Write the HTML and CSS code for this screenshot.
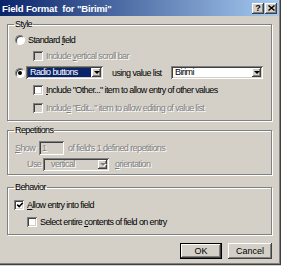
FILE: index.html
```html
<!DOCTYPE html>
<html lang="en">
<head>
  <meta charset="UTF-8">
  <title>Field Format</title>
  <link rel="stylesheet" href="styles.css">
</head>
<body>
  <div class="dialog">
    <div class="titlebar">
      <span class="title">Field Format&nbsp; for "Birimi"</span>
      <div class="caps">
        <span class="cap-btn">?</span>
        <span class="cap-btn">
          <svg width="7" height="6" viewBox="0 0 7 6"><path d="M0.5 0.5L6.5 5.5M6.5 0.5L0.5 5.5" stroke="#000" stroke-width="1.4"/></svg>
        </span>
      </div>
    </div>

    <div class="content">
      <fieldset class="group style-group">
        <legend>Style</legend>
        <div class="row r16">
          <span class="radio"></span>
          <span class="lbl">Standard <u>f</u>ield</span>
        </div>
        <div class="row r16 disabled">
          <span class="check off ind1"></span>
          <span class="lbl">Include <u>v</u>ertical scroll bar</span>
        </div>
        <div class="row r17">
          <span class="radio on"></span>
          <div class="combo combo-type">
            <span class="val sel">Radio buttons</span>
            <span class="drop"></span>
          </div>
          <span class="using">using value list</span>
          <div class="combo combo-list">
            <span class="val">Birimi</span>
            <span class="drop"></span>
          </div>
        </div>
        <div class="row r18">
          <span class="check ind1"></span>
          <span class="lbl"><u>I</u>nclude "Other..." item to allow entry of other values</span>
        </div>
        <div class="row r18 disabled">
          <span class="check off ind1"></span>
          <span class="lbl">Includ<u>e</u> "Edit..." item to allow editing of value list</span>
        </div>
      </fieldset>

      <fieldset class="group rep-group">
        <legend>Repetitions</legend>
        <div class="row r17 disabled">
          <span class="show-lbl"><u>S</u>how</span>
          <span class="field-box">1</span>
          <span class="after-box">of field's 1 defined repetitions</span>
        </div>
        <div class="row r16 disabled">
          <span class="use-lbl">Use</span>
          <div class="combo combo-orient off">
            <span class="val">vertical</span>
            <span class="drop"></span>
          </div>
          <span class="after-orient"><u>o</u>rientation</span>
        </div>
      </fieldset>

      <fieldset class="group beh-group">
        <legend>Behavior</legend>
        <div class="row r17">
          <span class="check checked">
            <svg width="8" height="8" viewBox="0 0 8 8"><path d="M1.2 3.6L3.2 5.6L6.8 1.8" fill="none" stroke="#000" stroke-width="1.5"/></svg>
          </span>
          <span class="lbl"><u>A</u>llow entry into field</span>
        </div>
        <div class="row r18">
          <span class="check ind2"></span>
          <span class="lbl">Select entire <u>c</u>ontents of field on entry</span>
        </div>
      </fieldset>

      <div class="actions">
        <button class="btn default">OK</button>
        <button class="btn">Cancel</button>
      </div>
    </div>
  </div>
</body>
</html>
```

FILE: styles.css
```css
* {
  box-sizing: border-box;
}
body {
  margin: 0;
  background: #d4d0c8;
  font-family: "Liberation Sans", Arial, sans-serif;
  font-size: 9px;
  letter-spacing: -0.6px;
  color: #000;
}
u {
  text-decoration-thickness: 1px;
  text-underline-offset: 1px;
}

.dialog {
  width: 281px;
  height: 265px;
  background: #d4d0c8;
  box-shadow: inset -1px -1px 0 #404040, inset -2px -2px 0 #808080;
  overflow: hidden;
}

/* title bar */
.titlebar {
  height: 16px;
  margin-right: 2px;
  padding: 0 2px 0 2px;
  background: linear-gradient(to right, #0a246a, #a6caf0);
  display: flex;
  align-items: center;
  justify-content: space-between;
}
.title {
  color: #fff;
  font-weight: bold;
  font-size: 9.5px;
  letter-spacing: -0.15px;
}
.caps {
  display: flex;
  gap: 1px;
}
.cap-btn {
  width: 12px;
  height: 11px;
  background: #d4d0c8;
  box-shadow: inset -1px -1px 0 #404040, inset 1px 1px 0 #fff, inset -2px -2px 0 #808080;
  display: flex;
  align-items: center;
  justify-content: center;
  font-weight: bold;
  font-size: 9px;
  letter-spacing: 0;
  line-height: 1;
}

/* body */
.content {
  padding: 3px 9px 0 7px;
}
.group {
  margin: 0;
  min-width: 0;
  padding: 3px 8px 3px 6px;
  border: 1px solid #808080;
  box-shadow: inset 1px 1px 0 #fff, 1px 1px 0 #fff;
}
.group legend {
  padding: 0 1px;
  line-height: 11px;
}
.style-group {
  padding-top: 2px;
}
.rep-group {
  margin-top: 4px;
  padding-bottom: 2px;
}
.beh-group {
  margin-top: 7px;
}

.row {
  display: flex;
  align-items: center;
}
.r16 { height: 16px; }
.r17 { height: 17px; }
.r18 { height: 18px; }

.disabled {
  color: #808080;
  text-shadow: 1px 1px 0 #fff;
}

/* radio + check */
.radio {
  width: 10px;
  height: 10px;
  margin-left: 1px;
  border-radius: 50%;
  border: 1px solid;
  border-color: #808080 #fff #fff #808080;
  background: #fff;
  box-shadow: inset 1px 1px 0 #404040;
  display: flex;
  align-items: center;
  justify-content: center;
}
.radio.on::after {
  content: "";
  width: 4px;
  height: 4px;
  border-radius: 50%;
  background: #000;
}
.radio + .lbl {
  margin-left: 3px;
}

.check {
  width: 10px;
  height: 10px;
  flex: none;
  background: #fff;
  box-shadow: inset 1px 1px 0 #808080, inset -1px -1px 0 #fff, inset 2px 2px 0 #404040, inset -2px -2px 0 #d4d0c8;
  display: flex;
  align-items: center;
  justify-content: center;
}
.check.off {
  background: #d4d0c8;
}
.check.checked svg {
  margin: 1px 0 0 1px;
}
.check + .lbl {
  margin-left: 3px;
}
.ind1 { margin-left: 19px; }
.ind2 { margin-left: 13px; }

/* combo boxes */
.combo {
  height: 13px;
  padding: 2px;
  background: #fff;
  box-shadow: inset 1px 1px 0 #808080, inset -1px -1px 0 #fff, inset 2px 2px 0 #404040, inset -2px -2px 0 #d4d0c8;
  display: flex;
  align-items: stretch;
}
.combo .val {
  flex: 1;
  padding-left: 2px;
  line-height: 9px;
}
.combo .val.sel {
  background: #0a246a;
  color: #fff;
  margin-right: 1px;
}
.drop {
  width: 9px;
  background: #d4d0c8;
  box-shadow: inset -1px -1px 0 #404040, inset 1px 1px 0 #fff, inset -2px -2px 0 #808080;
  display: flex;
  align-items: center;
  justify-content: center;
}
.drop::after {
  content: "";
  border-style: solid;
  border-width: 3px 3px 0;
  border-color: #000 transparent transparent;
}
.combo-type {
  width: 77px;
  margin-left: 1px;
}
.using {
  margin-left: 9px;
}
.combo-list {
  width: 92px;
  margin-left: auto;
}
.combo.off {
  background: #d4d0c8;
}
.combo.off .val {
  padding-left: 6px;
}
.combo.off .drop::after {
  border-top-color: #808080;
  filter: drop-shadow(1px 1px 0 #fff);
}

/* repetitions */
.show-lbl {
  width: 24px;
  margin-left: 1px;
}
.field-box {
  width: 25px;
  height: 14px;
  padding: 2px 0 0 3px;
  line-height: 10px;
  background: #d4d0c8;
  box-shadow: inset 1px 1px 0 #808080, inset -1px -1px 0 #fff, inset 2px 2px 0 #404040, inset -2px -2px 0 #d4d0c8;
}
.after-box {
  margin-left: 4px;
}
.use-lbl {
  width: 16px;
  margin-left: 13px;
}
.combo-orient {
  width: 66px;
}
.after-orient {
  margin-left: 6px;
}

/* buttons */
.actions {
  margin-top: 8px;
  display: flex;
  justify-content: flex-end;
  gap: 6px;
}
.btn {
  width: 44px;
  height: 16px;
  padding: 0;
  border: none;
  background: #d4d0c8;
  font: inherit;
  color: #000;
  box-shadow: inset -1px -1px 0 #404040, inset 1px 1px 0 #fff, inset -2px -2px 0 #808080;
}
.btn.default {
  width: 42px;
  box-shadow: inset 0 0 0 1px #000, inset -2px -2px 0 #404040, inset 2px 2px 0 #fff, inset -3px -3px 0 #808080;
}
```
